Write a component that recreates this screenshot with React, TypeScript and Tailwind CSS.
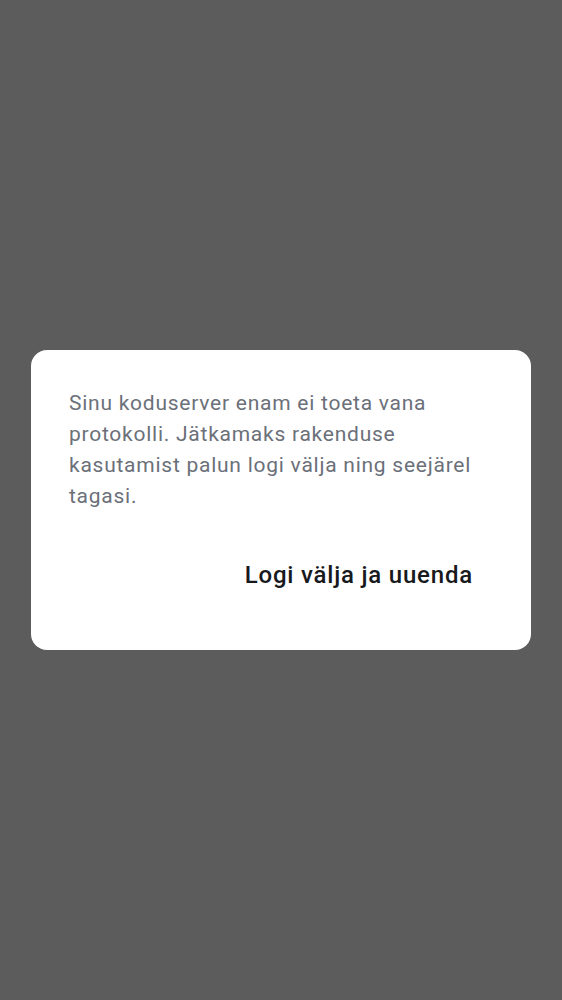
export default function App() {
    return (
        <div className="flex h-[1000px] w-full items-center justify-center bg-[#5c5c5c] font-['Roboto',sans-serif]">
            <div className="w-[500px] rounded-2xl bg-white px-[38px] pb-[51px] pt-[38px]">
                <p className="text-[21px] leading-[31px] tracking-[0.75px] text-[#6b7079]">
                    Sinu koduserver enam ei toeta vana protokolli. Jätkamaks rakenduse kasutamist palun logi välja ning seejärel tagasi.
                </p>
                <div className="mt-[39px] flex justify-end">
                    <button className="h-12 px-5 text-[24px] font-medium tracking-[0.8px] text-[#17191c]">
                        Logi välja ja uuenda
                    </button>
                </div>
            </div>
        </div>
    );
}
